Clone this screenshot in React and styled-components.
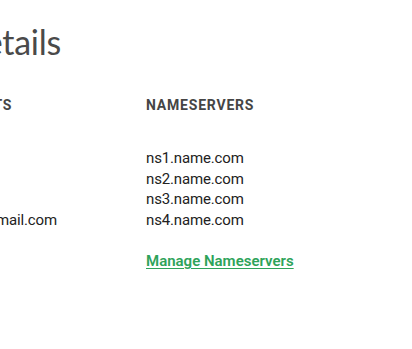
import React from "react";
import styled, { createGlobalStyle } from "styled-components";

const GlobalStyle = createGlobalStyle`
  html, body {
    margin: 0;
    padding: 0;
    background: #fff;
    overflow: hidden;
  }
  body {
    font-family: Roboto, "Open Sans", Arial, sans-serif;
    color: #333;
  }
`;

const StyledPage = styled.div`
  width: 800px;
  margin-left: -164px;
  padding-top: 22px;
`;

const StyledTitle = styled.h1`
  margin: 0 0 34px;
  font-family: Lato, Roboto, sans-serif;
  font-size: 34px;
  font-weight: 400;
  line-height: 40px;
  color: #4a4a4a;
  letter-spacing: -0.3px;
`;

const StyledColumns = styled.div`
  display: grid;
  grid-template-columns: 74px 188px 260px;
  column-gap: 24px;
`;

const StyledColumn = styled.div`
  display: flex;
  flex-direction: column;
  align-items: flex-start;
`;

const StyledLabel = styled.h3`
  margin: 0 0 34px;
  font-size: 14px;
  font-weight: 700;
  line-height: 18px;
  letter-spacing: 0.8px;
  color: #454545;
  white-space: nowrap;
`;

const StyledLine = styled.p`
  margin: 0;
  font-size: 15px;
  line-height: 20.5px;
  letter-spacing: -0.15px;
  color: #222;
  white-space: nowrap;
`;

const StyledLink = styled.a`
  margin-top: 21px;
  font-size: 15px;
  font-weight: 600;
  line-height: 20px;
  color: #2ea35a;
  text-decoration: underline;
  text-underline-offset: 2px;
`;

const columns = [
  { label: "STATUS", lines: ["Active", "Locked"] },
  { label: "CONTACTS", lines: ["John", "Smith", "Inc.", "jsmith@gmail.com"] },
  {
    label: "NAMESERVERS",
    lines: ["ns1.name.com", "ns2.name.com", "ns3.name.com", "ns4.name.com"],
    link: "Manage Nameservers",
  },
];

function App() {
  return (
    <>
      <GlobalStyle />
      <StyledPage>
        <StyledTitle>Domain Details</StyledTitle>
        <StyledColumns>
          {columns.map((col) => (
            <StyledColumn key={col.label}>
              <StyledLabel>{col.label}</StyledLabel>
              {col.lines.map((line) => (
                <StyledLine key={line}>{line}</StyledLine>
              ))}
              {col.link && <StyledLink href="#">{col.link}</StyledLink>}
            </StyledColumn>
          ))}
        </StyledColumns>
      </StyledPage>
    </>
  );
}

export default App;
